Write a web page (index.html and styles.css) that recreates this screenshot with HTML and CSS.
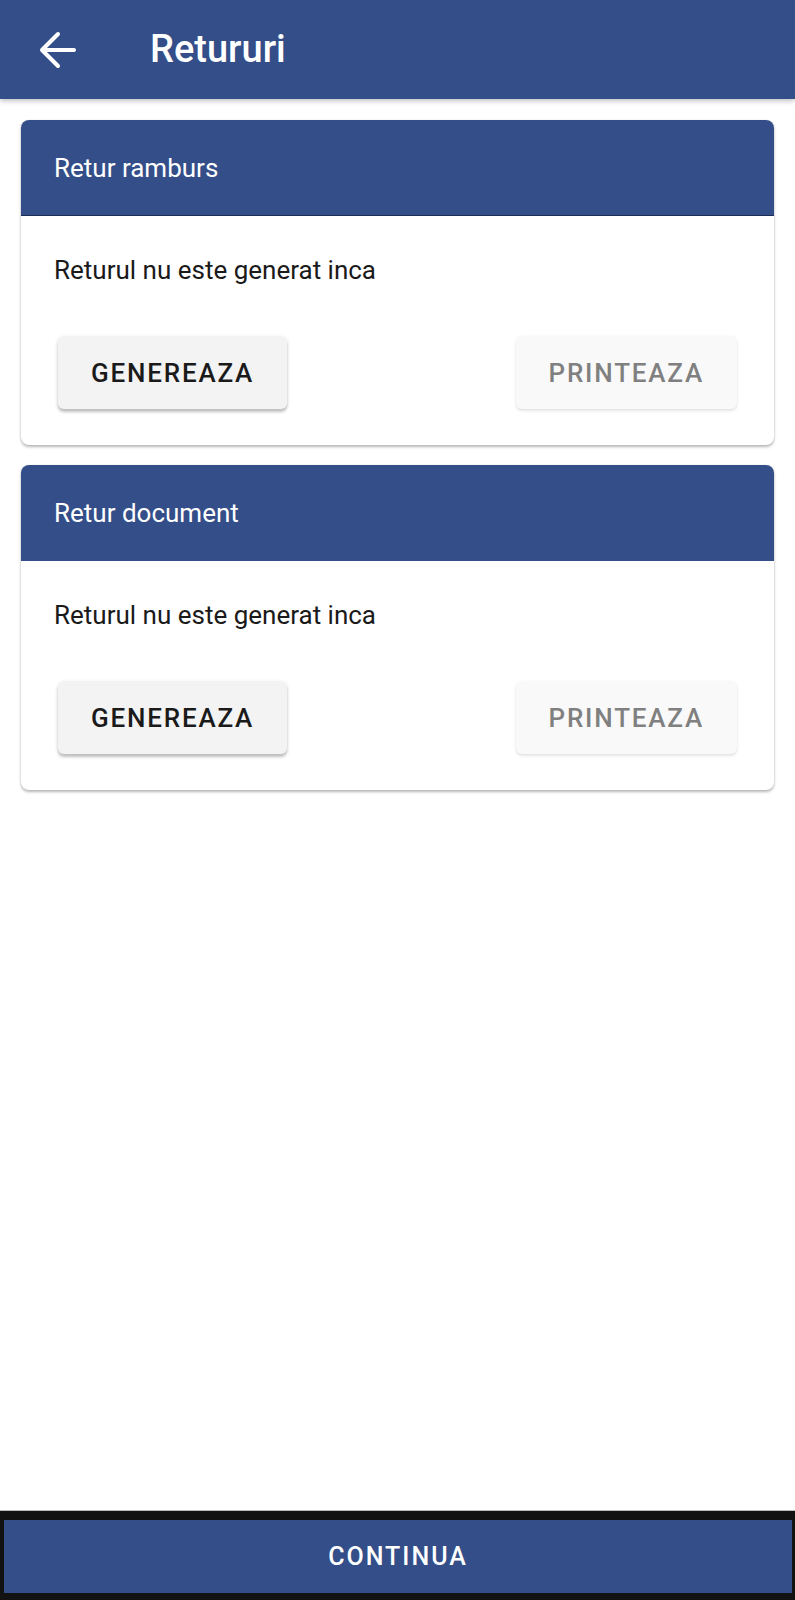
FILE: index.html
```html
<!DOCTYPE html>
<html>
<head>
    <title>Retururi</title>
    <link rel="stylesheet" href="styles.css">
</head>
<body>
    <div class="app-bar">
        <button class="back-button" aria-label="Inapoi">
            <svg width="44" height="44" viewBox="0 0 44 44">
                <path d="M38 22H7M22 6L6 22l16 16" fill="none" stroke="#fff" stroke-width="4" stroke-linecap="round" stroke-linejoin="round"/>
            </svg>
        </button>
        <h1>Retururi</h1>
    </div>

    <div class="content">
        <div class="card card-first">
            <div class="card-header">Retur ramburs</div>
            <div class="card-body">
                <p>Returul nu este generat inca</p>
                <div class="button-group">
                    <button class="btn">GENEREAZA</button>
                    <button class="btn btn-disabled" disabled>PRINTEAZA</button>
                </div>
            </div>
        </div>

        <div class="card">
            <div class="card-header">Retur document</div>
            <div class="card-body">
                <p>Returul nu este generat inca</p>
                <div class="button-group">
                    <button class="btn">GENEREAZA</button>
                    <button class="btn btn-disabled" disabled>PRINTEAZA</button>
                </div>
            </div>
        </div>
    </div>

    <div class="footer">
        <button class="continue-button">CONTINUA</button>
    </div>
</body>
</html>
```

FILE: styles.css
```css
html, body {
    margin: 0;
    padding: 0;
    height: 100%;
}
body {
    font-family: Roboto, "Liberation Sans", sans-serif;
    background: #fff;
    color: #1a1a1a;
    display: flex;
    flex-direction: column;
    height: 100vh;
}
.app-bar {
    height: 99px;
    flex-shrink: 0;
    background-color: #334e88;
    display: flex;
    align-items: center;
    box-shadow: 0 2px 5px rgba(0, 0, 0, 0.25);
    position: relative;
    z-index: 1;
}
.back-button {
    background: none;
    border: none;
    padding: 0;
    margin-left: 36px;
    width: 44px;
    height: 44px;
    display: flex;
    cursor: pointer;
}
.app-bar h1 {
    margin: 0 0 0 70px;
    color: #fff;
    font-size: 38px;
    font-weight: 500;
    padding-bottom: 2px;
}
.content {
    flex: 1;
    padding: 21px 21px 0;
}
.card {
    background: #fff;
    border-radius: 8px;
    overflow: hidden;
    box-shadow: 0 2px 3px rgba(0, 0, 0, 0.28), 0 0 2px rgba(0, 0, 0, 0.08);
    margin-bottom: 20px;
}
.card-header {
    background-color: #334e88;
    color: #fff;
    font-size: 26px;
    height: 96px;
    display: flex;
    align-items: center;
    padding: 0 33px;
}
.card-first .card-header {
    height: 95px;
    border-bottom: 1px solid #1c2d55;
}
.card-body {
    padding: 39px 33px 36px;
}
.card-body p {
    margin: 0;
    font-size: 26px;
    line-height: 30px;
}
.button-group {
    display: flex;
    justify-content: space-between;
    margin-top: 51px;
    padding: 0 4px;
}
.btn {
    font-family: Roboto, "Liberation Sans", sans-serif;
    height: 73px;
    padding: 0 33px;
    font-size: 26px;
    font-weight: 500;
    letter-spacing: 1.8px;
    color: #1a1a1a;
    background-color: #f3f3f3;
    border: none;
    border-radius: 6px;
    box-shadow: 0 3px 3px rgba(0, 0, 0, 0.22), 0 1px 5px rgba(0, 0, 0, 0.08);
    cursor: pointer;
}
.btn-disabled {
    color: #808080;
    background-color: #f9f9f9;
    box-shadow: 0 2px 3px rgba(0, 0, 0, 0.1), 0 0 3px rgba(0, 0, 0, 0.04);
    cursor: default;
}
.footer {
    flex-shrink: 0;
    height: 90px;
    box-sizing: border-box;
    background-color: #121212;
    padding: 9px 3px 7px 4px;
    border-top: 1px solid #bbb;
    display: flex;
}
.continue-button {
    flex: 1;
    background-color: #334e88;
    color: #fff;
    border: none;
    font-family: Roboto, "Liberation Sans", sans-serif;
    font-size: 25px;
    font-weight: 500;
    letter-spacing: 2px;
    cursor: pointer;
}
```
